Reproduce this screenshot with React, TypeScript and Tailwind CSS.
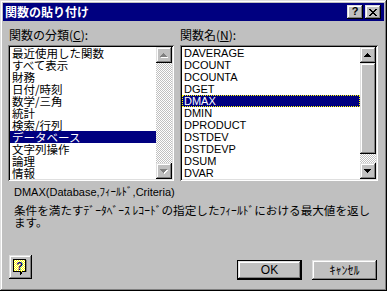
import React from "react";

const raised =
  "shadow-[inset_-1px_-1px_0_#000000,inset_1px_1px_0_#dfdfdf,inset_-2px_-2px_0_#808080,inset_2px_2px_0_#ffffff]";
const sunken =
  "shadow-[inset_1px_1px_0_#808080,inset_-1px_-1px_0_#ffffff,inset_2px_2px_0_#000000,inset_-2px_-2px_0_#dfdfdf]";
const checker =
  "bg-[image:repeating-conic-gradient(#c0c0c0_0%_25%,#ffffff_0%_50%)] bg-size-[2px_2px]";

function Arrow({ dir, disabled }: { dir: "up" | "down"; disabled?: boolean }) {
  const rows =
    dir === "up"
      ? [
          [7, 6, 1],
          [6, 7, 3],
          [5, 8, 5],
          [4, 9, 7],
        ]
      : [
          [4, 6, 7],
          [5, 7, 5],
          [6, 8, 3],
          [7, 9, 1],
        ];
  return (
    <svg width="16" height="16" viewBox="0 0 16 16" shapeRendering="crispEdges">
      {disabled &&
        rows.map(([x, y, w], i) => (
          <rect key={"s" + i} x={x + 1} y={y + 1} width={w} height={1} fill="#ffffff" />
        ))}
      {rows.map(([x, y, w], i) => (
        <rect key={i} x={x} y={y} width={w} height={1} fill={disabled ? "#808080" : "#000000"} />
      ))}
    </svg>
  );
}

function ScrollBtn({ dir, disabled }: { dir: "up" | "down"; disabled?: boolean }) {
  return (
    <div className={`w-[16px] h-[16px] bg-[#c0c0c0] ${raised}`}>
      <Arrow dir={dir} disabled={disabled} />
    </div>
  );
}

export default function App() {
  const left = [
    "最近使用した関数",
    "すべて表示",
    "財務",
    "日付/時刻",
    "数学/三角",
    "統計",
    "検索/行列",
    "データベース",
    "文字列操作",
    "論理",
    "情報",
  ];
  const right = [
    "DAVERAGE",
    "DCOUNT",
    "DCOUNTA",
    "DGET",
    "DMAX",
    "DMIN",
    "DPRODUCT",
    "DSTDEV",
    "DSTDEVP",
    "DSUM",
    "DVAR",
  ];
  return (
    <div
      className={`w-[387px] h-[291px] bg-[#c0c0c0] p-[3px] flex flex-col text-black text-[12px] leading-[12px] font-['Noto_Sans_CJK_JP',sans-serif] shadow-[inset_-1px_-1px_0_#000000,inset_1px_1px_0_#dfdfdf,inset_-2px_-2px_0_#808080,inset_2px_2px_0_#ffffff]`}
    >
      {/* Title bar */}
      <div className="h-[18px] bg-[#000080] flex items-center pl-[2px] pr-[3px]">
        <span className="flex-1 text-white font-bold text-[12px] leading-[14px]">関数の貼り付け</span>
        <div
          className={`w-[16px] h-[14px] bg-[#c0c0c0] ${raised} flex items-center justify-center font-['Liberation_Sans',sans-serif] font-bold text-[11px] leading-[11px] pb-[1px]`}
        >
          ?
        </div>
        <div className={`w-[16px] h-[14px] ml-[2px] bg-[#c0c0c0] ${raised} flex items-center justify-center`}>
          <svg width="8" height="7" viewBox="0 0 8 7" shapeRendering="crispEdges">
            <path d="M0 0h2v1h-2zM6 0h2v1h-2zM1 1h2v1h-2zM5 1h2v1h-2zM2 2h4v1h-4zM3 3h2v1h-2zM2 4h4v1h-4zM1 5h2v1h-2zM5 5h2v1h-2zM0 6h2v1h-2zM6 6h2v1h-2z" fill="#000" />
          </svg>
        </div>
      </div>

      {/* Content */}
      <div className="flex-1 flex flex-col pl-[5px] pr-[6px] pb-[8px]">
        <div className="flex gap-[6px] mt-[8px]">
          {/* Left column */}
          <div className="w-[166px] flex flex-col">
            <div className="h-[12px] mb-[4px] pl-[1px] whitespace-nowrap">
              関数の分類(<span className="underline">C</span>):
            </div>
            <div className={`h-[136px] p-[2px] bg-white flex ${sunken}`}>
              <div className="flex-1 flex flex-col overflow-hidden text-[11.5px]">
                {left.map((t, i) => (
                  <div
                    key={t}
                    className={`h-[12px] leading-[12px] pl-[2px] whitespace-nowrap ${
                      i === 7 ? "bg-[#000080] text-white" : ""
                    }`}
                  >
                    {t}
                  </div>
                ))}
              </div>
              <div className="w-[16px] flex flex-col">
                <ScrollBtn dir="up" disabled />
                <div className={`flex-1 ${checker}`} />
                <ScrollBtn dir="down" disabled />
              </div>
            </div>
          </div>

          {/* Right column */}
          <div className="w-[198px] flex flex-col">
            <div className="h-[12px] mb-[4px] whitespace-nowrap">
              関数名(<span className="underline">N</span>):
            </div>
            <div className={`h-[136px] p-[2px] bg-white flex ${sunken}`}>
              <div className="flex-1 flex flex-col overflow-hidden font-['Liberation_Sans',sans-serif] text-[11px]">
                {right.map((t, i) => (
                  <div
                    key={t}
                    className={`h-[12px] leading-[12px] pl-[2px] whitespace-nowrap ${
                      i === 4
                        ? "bg-[#000080] text-white outline-1 outline-dotted outline-[#ffff00] -outline-offset-1"
                        : ""
                    }`}
                  >
                    {t}
                  </div>
                ))}
              </div>
              <div className="w-[16px] flex flex-col">
                <ScrollBtn dir="up" />
                <div className={`h-[91px] bg-[#c0c0c0] ${raised}`} />
                <div className={`flex-1 ${checker}`} />
                <ScrollBtn dir="down" />
              </div>
            </div>
          </div>
        </div>

        {/* Description */}
        <div className="mt-[5px] pl-[6px] h-[12px] leading-[12px] whitespace-nowrap font-['Liberation_Sans','Noto_Sans_CJK_JP',sans-serif] text-[11px]">
          DMAX(Database,ﾌｨｰﾙﾄﾞ,Criteria)
        </div>
        <div className="mt-[6px] pl-[6px] leading-[12px] whitespace-nowrap text-[11.6px]">
          条件を満たすﾃﾞｰﾀﾍﾞｰｽ ﾚｺｰﾄﾞの指定したﾌｨｰﾙﾄﾞにおける最大値を返し
          <br />
          ます。
        </div>

        {/* Bottom buttons */}
        <div className="mt-auto flex items-end">
          <div className={`ml-[1px] mb-[1px] w-[23px] h-[24px] bg-[#c0c0c0] ${raised} flex items-center justify-center`}>
            <svg width="15" height="17" viewBox="0 0 15 17" shapeRendering="crispEdges">
              <defs>
                <pattern id="dots" width="2" height="2" patternUnits="userSpaceOnUse">
                  <rect width="2" height="2" fill="#ffffff" />
                  <rect width="1" height="1" fill="#ffff00" />
                  <rect x="1" y="1" width="1" height="1" fill="#ffff00" />
                </pattern>
              </defs>
              <path d="M0.5 0.5h12v12h-3l-2 3v-3h-7z" fill="url(#dots)" stroke="#000" />
              <rect x="13" y="1" width="1" height="12" fill="#808080" />
              <text
                x="6.5"
                y="11"
                textAnchor="middle"
                fontFamily="Liberation Sans, sans-serif"
                fontWeight="bold"
                fontSize="11"
                fill="#000080"
              >
                ?
              </text>
            </svg>
          </div>
          <div className="flex-1" />
          <div className="w-[65px] h-[20px] bg-black p-[1px]">
            <div
              className={`w-full h-full bg-[#c0c0c0] ${raised} flex items-center justify-center font-['Liberation_Sans',sans-serif] text-[12px]`}
            >
              OK
            </div>
          </div>
          <div
            className={`ml-[10px] mr-[1px] w-[65px] h-[20px] bg-[#c0c0c0] ${raised} flex items-center justify-center`}
          >
            ｷｬﾝｾﾙ
          </div>
        </div>
      </div>
    </div>
  );
}
